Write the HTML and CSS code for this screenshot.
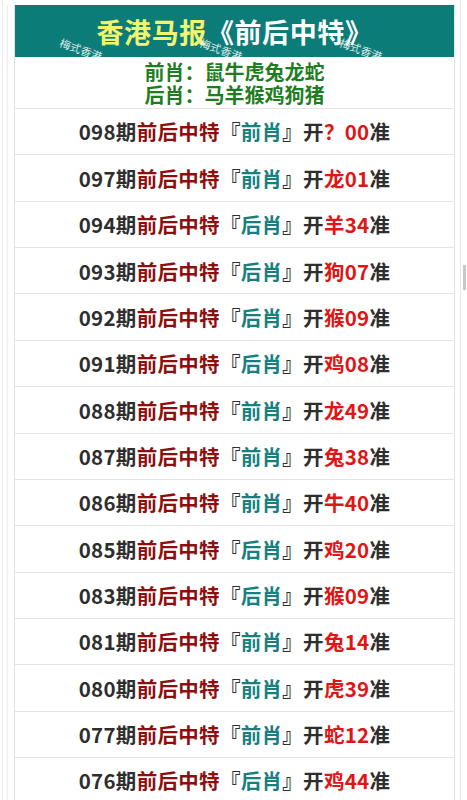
FILE: index.html
```html
<!DOCTYPE html>
<html lang="zh">
<head>
<meta charset="utf-8">
<title>香港马报《前后中特》</title>
<link rel="stylesheet" href="styles.css">
</head>
<body>
<div class="outer">
  <div class="inner">
    <div class="board">
      <div class="head">
        <span class="yl">香港马报</span><span class="wt">《前后中特》</span>
        <span class="wm wm1">梅式香港</span>
        <span class="wm wm2">梅式香港</span>
        <span class="wm wm3">梅式香港</span>
      </div>
      <div class="intro">
        <div>前肖：鼠牛虎兔龙蛇</div>
        <div>后肖：马羊猴鸡狗猪</div>
      </div>
      <div class="row"><span class="dk">098期</span><span class="rd">前后中特</span><span class="dk">『</span><span class="tl">前肖</span><span class="dk">』开</span><span class="hit">？00</span><span class="dk">准</span></div>
      <div class="row"><span class="dk">097期</span><span class="rd">前后中特</span><span class="dk">『</span><span class="tl">前肖</span><span class="dk">』开</span><span class="hit">龙01</span><span class="dk">准</span></div>
      <div class="row"><span class="dk">094期</span><span class="rd">前后中特</span><span class="dk">『</span><span class="tl">后肖</span><span class="dk">』开</span><span class="hit">羊34</span><span class="dk">准</span></div>
      <div class="row"><span class="dk">093期</span><span class="rd">前后中特</span><span class="dk">『</span><span class="tl">后肖</span><span class="dk">』开</span><span class="hit">狗07</span><span class="dk">准</span></div>
      <div class="row"><span class="dk">092期</span><span class="rd">前后中特</span><span class="dk">『</span><span class="tl">后肖</span><span class="dk">』开</span><span class="hit">猴09</span><span class="dk">准</span></div>
      <div class="row"><span class="dk">091期</span><span class="rd">前后中特</span><span class="dk">『</span><span class="tl">后肖</span><span class="dk">』开</span><span class="hit">鸡08</span><span class="dk">准</span></div>
      <div class="row"><span class="dk">088期</span><span class="rd">前后中特</span><span class="dk">『</span><span class="tl">前肖</span><span class="dk">』开</span><span class="hit">龙49</span><span class="dk">准</span></div>
      <div class="row"><span class="dk">087期</span><span class="rd">前后中特</span><span class="dk">『</span><span class="tl">前肖</span><span class="dk">』开</span><span class="hit">兔38</span><span class="dk">准</span></div>
      <div class="row"><span class="dk">086期</span><span class="rd">前后中特</span><span class="dk">『</span><span class="tl">前肖</span><span class="dk">』开</span><span class="hit">牛40</span><span class="dk">准</span></div>
      <div class="row"><span class="dk">085期</span><span class="rd">前后中特</span><span class="dk">『</span><span class="tl">后肖</span><span class="dk">』开</span><span class="hit">鸡20</span><span class="dk">准</span></div>
      <div class="row"><span class="dk">083期</span><span class="rd">前后中特</span><span class="dk">『</span><span class="tl">后肖</span><span class="dk">』开</span><span class="hit">猴09</span><span class="dk">准</span></div>
      <div class="row"><span class="dk">081期</span><span class="rd">前后中特</span><span class="dk">『</span><span class="tl">前肖</span><span class="dk">』开</span><span class="hit">兔14</span><span class="dk">准</span></div>
      <div class="row"><span class="dk">080期</span><span class="rd">前后中特</span><span class="dk">『</span><span class="tl">前肖</span><span class="dk">』开</span><span class="hit">虎39</span><span class="dk">准</span></div>
      <div class="row"><span class="dk">077期</span><span class="rd">前后中特</span><span class="dk">『</span><span class="tl">前肖</span><span class="dk">』开</span><span class="hit">蛇12</span><span class="dk">准</span></div>
      <div class="row"><span class="dk">076期</span><span class="rd">前后中特</span><span class="dk">『</span><span class="tl">后肖</span><span class="dk">』开</span><span class="hit">鸡44</span><span class="dk">准</span></div>
    </div>
  </div>
  <span class="thumb"></span>
</div>
</body>
</html>
```
FILE: styles.css
```css
html, body {
  margin: 0;
  padding: 0;
  background: #ffffff;
}
body {
  font-family: "Noto Sans CJK SC", "Noto Sans", sans-serif;
  font-weight: 700;
}
.outer {
  position: relative;
  margin: 0 6px 0 2px;
  border-left: 1px solid #ececec;
  border-right: 1px solid #e6e6e6;
  padding: 5px 5px 0 4px;
}
.inner {
  border-left: 1px solid #ececec;
  padding-left: 6px;
}
.board {
  border-left: 1px solid #e2e2e2;
  border-right: 1px solid #e2e2e2;
}
.head {
  position: relative;
  height: 52px;
  background: #0c7c78;
  display: flex;
  align-items: center;
  justify-content: center;
  font-size: 27px;
  line-height: 1;
  letter-spacing: 0.6px;
}
.yl { color: #f2f56c; }
.wt { color: #ffffff; }
.wm {
  position: absolute;
  top: 39px;
  font-size: 11px;
  font-weight: 400;
  color: rgba(255, 255, 255, 0.85);
  transform: rotate(20deg);
  letter-spacing: 0;
  white-space: nowrap;
}
.wm1 { left: 44px; }
.wm2 { left: 184px; }
.wm3 { left: 324px; }
.intro {
  height: 51px;
  display: flex;
  flex-direction: column;
  justify-content: center;
  align-items: center;
  color: #1f7d1f;
  font-size: 20px;
  line-height: 23px;
}
.row {
  height: 45.36px;
  border-top: 1px solid #e4e4e4;
  display: flex;
  align-items: center;
  justify-content: center;
  font-size: 20.5px;
  letter-spacing: 0.3px;
  line-height: 1;
}
.dk { color: #2e2e2e; }
.rd { color: #8e0e0e; }
.tl { color: #177f7f; }
.hit { color: #e01515; }
.thumb {
  position: absolute;
  right: -6px;
  top: 265px;
  width: 3px;
  height: 25px;
  background: #c8c8c8;
}
```
